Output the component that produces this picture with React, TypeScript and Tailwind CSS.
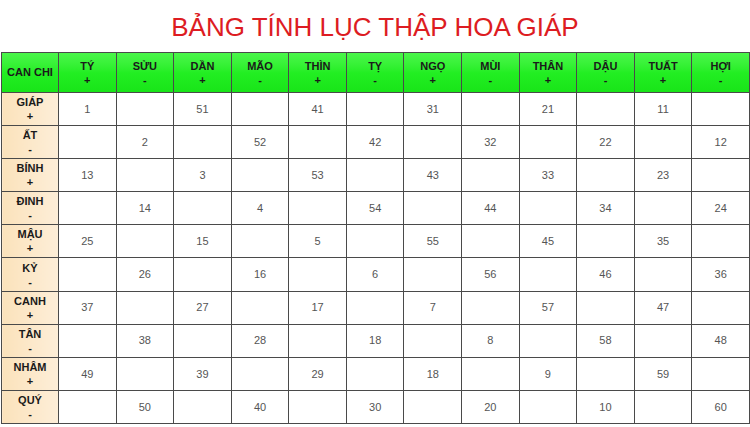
import React from 'react';

const chi = [
  { name: 'TÝ', sign: '+' },
  { name: 'SỬU', sign: '-' },
  { name: 'DẦN', sign: '+' },
  { name: 'MÃO', sign: '-' },
  { name: 'THÌN', sign: '+' },
  { name: 'TỴ', sign: '-' },
  { name: 'NGỌ', sign: '+' },
  { name: 'MÙI', sign: '-' },
  { name: 'THÂN', sign: '+' },
  { name: 'DẬU', sign: '-' },
  { name: 'TUẤT', sign: '+' },
  { name: 'HỢI', sign: '-' },
];

// each row: can name, sign, then the six numbers in the matching columns
const rows: { name: string; sign: string; values: number[] }[] = [
  { name: 'GIÁP', sign: '+', values: [1, 51, 41, 31, 21, 11] },
  { name: 'ẤT', sign: '-', values: [2, 52, 42, 32, 22, 12] },
  { name: 'BÍNH', sign: '+', values: [13, 3, 53, 43, 33, 23] },
  { name: 'ĐINH', sign: '-', values: [14, 4, 54, 44, 34, 24] },
  { name: 'MẬU', sign: '+', values: [25, 15, 5, 55, 45, 35] },
  { name: 'KỶ', sign: '-', values: [26, 16, 6, 56, 46, 36] },
  { name: 'CANH', sign: '+', values: [37, 27, 17, 7, 57, 47] },
  { name: 'TÂN', sign: '-', values: [38, 28, 18, 8, 58, 48] },
  { name: 'NHÂM', sign: '+', values: [49, 39, 29, 18, 9, 59] },
  { name: 'QUÝ', sign: '-', values: [50, 40, 30, 20, 10, 60] },
];

const cellAt = (rowIndex: number, col: number, values: number[]) => {
  const plus = rowIndex % 2 === 0;
  if (plus !== (col % 2 === 0)) return null;
  return values[Math.floor(col / 2)];
};

export default function App() {
  return (
    <div className="w-[750px] h-[427px] bg-white overflow-hidden font-['Liberation_Sans',Arial,sans-serif]">
      <h1 className="h-[52px] flex items-center justify-center text-[26px] text-[#dd1c22] pt-[2px]">
        BẢNG TÍNH LỤC THẬP HOA GIÁP
      </h1>
      <table className="table-fixed border-collapse w-[748px] ml-[1px]">
        <colgroup>
          <col className="w-[57px]" />
          {chi.map((c) => (
            <col key={c.name} className="w-[57.58px]" />
          ))}
        </colgroup>
        <thead>
          <tr className="h-[40px] bg-gradient-to-b from-[#4af64a] via-[#22ee22] to-[#18e418]">
            <th className="border border-[#4a4a4a] text-[11px] font-bold text-[#1a1a1a]">CAN CHI</th>
            {chi.map((c) => (
              <th key={c.name} className="border border-[#4a4a4a] text-[11px] font-bold text-[#1a1a1a] leading-[14px]">
                <div>{c.name}</div>
                <div>{c.sign}</div>
              </th>
            ))}
          </tr>
        </thead>
        <tbody>
          {rows.map((r, ri) => (
            <tr key={r.name} className="h-[33.1px]">
              <td className="border border-[#4a4a4a] bg-gradient-to-r from-[#fbe2bb] to-[#fdeed8] text-center text-[11px] font-bold text-[#1a1a1a] leading-[14px]">
                <div>{r.name}</div>
                <div>{r.sign}</div>
              </td>
              {chi.map((c, ci) => (
                <td key={c.name} className="border border-[#4a4a4a] text-center text-[11px] text-[#555]">
                  {cellAt(ri, ci, r.values)}
                </td>
              ))}
            </tr>
          ))}
        </tbody>
      </table>
    </div>
  );
}
